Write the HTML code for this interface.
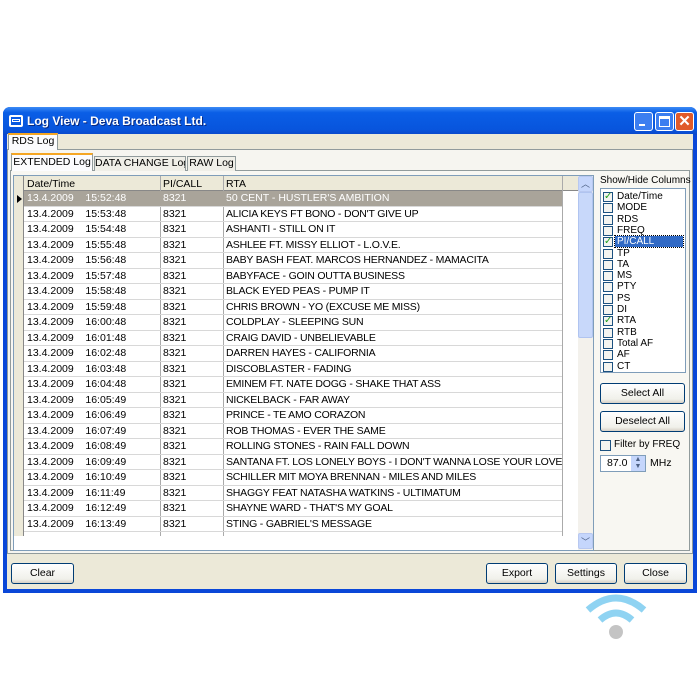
<!DOCTYPE html><html><head><style>
*{box-sizing:border-box;margin:0;padding:0}
body{width:700px;height:700px;background:#fff;position:relative;font-family:"Liberation Sans",sans-serif;font-size:10.5px;color:#000;overflow:hidden;white-space:nowrap}
.a{position:absolute}
.win{left:3px;top:107px;width:694px;height:486px;background:#0a47d8;border-radius:7px 7px 0 0}
.title{left:3px;top:107px;width:694px;height:28px;border-radius:7px 7px 0 0;background:linear-gradient(#3d8bf5,#0a5ee6 20%,#0855dd 80%,#0a47c8)}
.body{left:7px;top:134px;width:686px;height:455px;background:#ece9d8}
.tab{background:#fcfcfe;border:1px solid #919b9c;border-bottom:none;white-space:nowrap;text-align:center;overflow:hidden}
.tabsel{border-top:2px solid #f5a623;background:#fcfcfe}
.panel{border:1px solid #919b9c;background:#fcfcfe}
.btn{border:1px solid #003c74;border-radius:3px;background:linear-gradient(#fff,#f0f0ea 80%,#d6d0c5);text-align:center;line-height:19px;font-size:10.5px}
.row{position:absolute;left:0;height:15.5px;width:538px;border-bottom:1px solid #d8d8d8;line-height:15px}
.row span{position:absolute}
.cb{position:absolute;left:2px;width:10px;height:10px;border:1px solid #1c5180;background:#f4f4f0}
</style></head><body>
<div class="a win"></div>
<div class="a title"></div>
<div class="a" style="left:9px;top:115px;width:14px;height:12px;border:2px solid #fff;border-radius:2px"><div style="margin:2px 1px;height:3px;border:1px solid #fff"></div></div>
<div class="a" style="left:27px;top:114px;color:#fff;font-weight:bold;font-size:12px;text-shadow:1px 1px #0a2a80">Log View - Deva Broadcast Ltd.</div>
<div class="a" style="left:634px;top:112px;width:19px;height:19px;border:1px solid #fff;border-radius:3px;background:#3c7ef0"><div style="position:absolute;left:4px;top:11px;width:6px;height:2px;background:#fff"></div></div>
<div class="a" style="left:655px;top:112px;width:19px;height:19px;border:1px solid #fff;border-radius:3px;background:#3c7ef0"><div style="position:absolute;left:3px;top:3px;width:11px;height:11px;border:1px solid #fff;border-top-width:3px"></div></div>
<div class="a" style="left:675px;top:112px;width:19px;height:19px;border:1px solid #fff;border-radius:3px;background:#e05a2a;color:#fff;font-weight:bold;font-size:15px;text-align:center;line-height:17px">✕</div>
<div class="a body"></div>
<div class="a panel" style="left:7px;top:149px;width:686px;height:405px;background:#f6f5f0"></div>
<div class="a tab tabsel" style="left:8px;top:133px;width:50px;height:17px;line-height:13px">RDS Log</div>
<div class="a panel" style="left:10px;top:170px;width:680px;height:381px;background:#f8f7f2"></div>
<div class="a tab tabsel" style="left:11px;top:153px;width:82px;height:18px;line-height:14px">EXTENDED Log</div>
<div class="a tab" style="left:94px;top:156px;width:92px;height:15px;line-height:13px;background:#f0efe8">DATA CHANGE Log</div>
<div class="a tab" style="left:187px;top:156px;width:49px;height:15px;line-height:13px;background:#f0efe8">RAW Log</div>
<div class="a" style="left:13px;top:175px;width:581px;height:376px;border:1px solid #7f9db9;background:#fff"></div>
<div class="a" style="left:14px;top:176px;width:564px;height:15px;background:#ece9d8;border-bottom:1px solid #888"></div>
<div class="a" style="left:14px;top:176px;width:10px;height:360px;background:#ece9d8;border-right:1px solid #888"></div>
<div class="a" style="left:27px;top:178px">Date/Time</div>
<div class="a" style="left:160px;top:176px;height:360px;border-left:1px solid #aaa"></div>
<div class="a" style="left:223px;top:176px;height:360px;border-left:1px solid #aaa"></div>
<div class="a" style="left:562px;top:176px;height:360px;border-left:1px solid #aaa"></div>
<div class="a" style="left:163px;top:178px">PI/CALL</div>
<div class="a" style="left:226px;top:178px">RTA</div>
<div class="a" style="left:17px;top:195px;width:0;height:0;border-left:5px solid #000;border-top:4px solid transparent;border-bottom:4px solid transparent"></div>
<div class="a" style="left:24px;top:191px;width:538px;height:345px">
<div class="row" style="top:0;background:#a9a49a;color:#fff"><span style="left:3px">13.4.2009 &nbsp;&nbsp;&nbsp;15:52:48</span><span style="left:139px">8321</span><span style="left:202px">50 CENT - HUSTLER'S AMBITION</span></div>
</div>
<div class="a" id="rows" style="left:24px;top:191px;width:538px"></div>
<div class="a" style="left:578px;top:176px;width:15px;height:374px;background:#f3f1ec"></div>
<div class="a" style="left:578px;top:176px;width:15px;height:16px;background:#c5d6fc;border:1px solid #b8c8f0;border-radius:2px;font-size:9px;text-align:center;color:#4d6185">︿</div>
<div class="a" style="left:578px;top:192px;width:15px;height:146px;background:#c8d8fa;border:1px solid #b0c4f0;border-radius:2px"></div>
<div class="a" style="left:578px;top:533px;width:15px;height:16px;background:#c5d6fc;border:1px solid #b8c8f0;border-radius:2px;font-size:9px;text-align:center;color:#4d6185;line-height:16px">﹀</div>
<div class="a" style="left:600px;top:175px;font-size:10px">Show/Hide Columns</div>
<div class="a" style="left:600px;top:188px;width:86px;height:185px;border:1px solid #7f9db9;background:#fff" id="lb"></div>
<div class="a btn" style="left:600px;top:383px;width:85px;height:21px">Select All</div>
<div class="a btn" style="left:600px;top:411px;width:85px;height:21px">Deselect All</div>
<div class="a" style="left:600px;top:440px;width:11px;height:11px;border:1px solid #1c5180;background:#f4f4f0"></div>
<div class="a" style="left:614px;top:439px;font-size:10px">Filter by FREQ</div>
<div class="a" style="left:600px;top:455px;width:46px;height:17px;border:1px solid #7f9db9;background:#fff;padding-left:6px;line-height:15px">87.0</div>
<div class="a" style="left:631px;top:456px;width:14px;height:15px;background:#c5d6fc;font-size:7px;line-height:7px;text-align:center;color:#4d6185">▲<br>▼</div>
<div class="a" style="left:650px;top:457px">MHz</div>
<div class="a btn" style="left:11px;top:563px;width:63px;height:21px">Clear</div>
<div class="a btn" style="left:486px;top:563px;width:62px;height:21px">Export</div>
<div class="a btn" style="left:555px;top:563px;width:62px;height:21px">Settings</div>
<div class="a btn" style="left:624px;top:563px;width:63px;height:21px">Close</div>
<svg class="a" style="left:580px;top:590px" width="72" height="52"><path d="M8 20 Q36 -4 64 20" stroke="#8fd3f2" stroke-width="7" fill="none"/><path d="M20 30 Q36 16 52 30" stroke="#8fd3f2" stroke-width="7" fill="none"/><circle cx="36" cy="42" r="7" fill="#c4c4c4"/></svg>
<script>
var d=[["15:53:48","ALICIA KEYS FT BONO - DON'T GIVE UP"],["15:54:48","ASHANTI - STILL ON IT"],["15:55:48","ASHLEE FT. MISSY ELLIOT - L.O.V.E."],["15:56:48","BABY BASH FEAT. MARCOS HERNANDEZ - MAMACITA"],["15:57:48","BABYFACE - GOIN OUTTA BUSINESS"],["15:58:48","BLACK EYED PEAS - PUMP IT"],["15:59:48","CHRIS BROWN - YO (EXCUSE ME MISS)"],["16:00:48","COLDPLAY - SLEEPING SUN"],["16:01:48","CRAIG DAVID - UNBELIEVABLE"],["16:02:48","DARREN HAYES - CALIFORNIA"],["16:03:48","DISCOBLASTER - FADING"],["16:04:48","EMINEM FT. NATE DOGG - SHAKE THAT ASS"],["16:05:49","NICKELBACK - FAR AWAY"],["16:06:49","PRINCE - TE AMO CORAZON"],["16:07:49","ROB THOMAS - EVER THE SAME"],["16:08:49","ROLLING STONES - RAIN FALL DOWN"],["16:09:49","SANTANA FT. LOS LONELY BOYS - I DON'T WANNA LOSE YOUR LOVE"],["16:10:49","SCHILLER MIT MOYA BRENNAN - MILES AND MILES"],["16:11:49","SHAGGY FEAT NATASHA WATKINS - ULTIMATUM"],["16:12:49","SHAYNE WARD - THAT'S MY GOAL"],["16:13:49","STING - GABRIEL'S MESSAGE"]];
var h="";d.forEach(function(r,i){h+='<div class="row" style="top:'+((i+1)*15.5)+'px"><span style="left:3px">13.4.2009 &nbsp;&nbsp;&nbsp;'+r[0]+'</span><span style="left:139px">8321</span><span style="left:202px;letter-spacing:-0.2px">'+r[1]+'</span></div>'});
document.getElementById('rows').innerHTML=h;
var it=["Date/Time","MODE","RDS","FREQ","PI/CALL","TP","TA","MS","PTY","PS","DI","RTA","RTB","Total AF","AF","CT"],ck={0:1,4:1,11:1},l="";
it.forEach(function(t,i){var y=2+i*11.3;l+='<div class="cb" style="top:'+(y+1)+'px;color:#21a121;font-size:10px;line-height:8px;text-align:center">'+(ck[i]?'✓':'')+'</div><div style="position:absolute;left:14px;top:'+y+'px;height:11px;font-size:10px;line-height:11px;padding:0 2px;'+(i==4?'background:#316ac5;color:#fff;width:68px;outline:1px dotted #000':'')+'">'+t+'</div>'});
document.getElementById('lb').innerHTML=l;
</script>
</body></html>
